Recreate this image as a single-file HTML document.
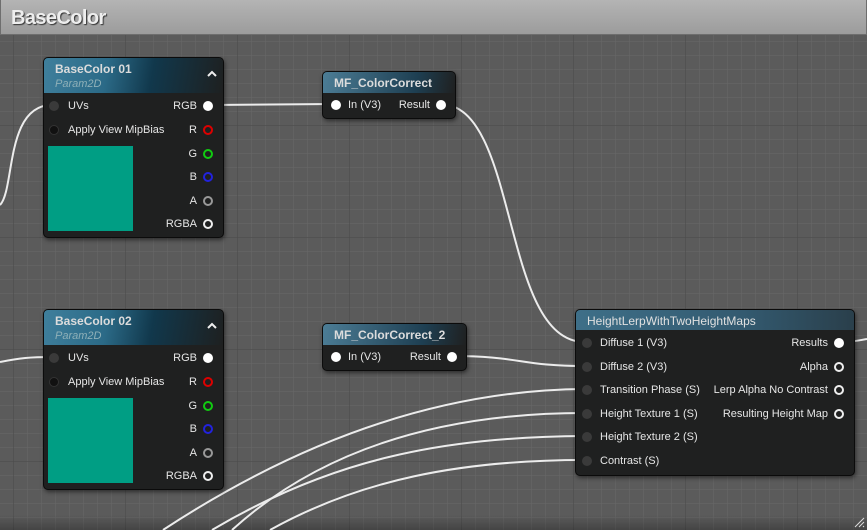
<!DOCTYPE html>
<html><head><style>
*{margin:0;padding:0;box-sizing:border-box}
body{width:867px;height:530px;overflow:hidden;background:#5b5b5b;font-family:"Liberation Sans",sans-serif;position:relative}
svg.bg{position:absolute;left:0;top:0}
.title{position:absolute;left:0;top:0;width:867px;height:35px;background:linear-gradient(#b4b4b4,#9c9c9c);border:1px solid #6e6e6e;border-top:0;}
.title span{position:absolute;left:10px;top:7px;font-size:20px;font-weight:bold;color:#eee;text-shadow:1px 1px 1px #333;letter-spacing:-0.6px}
.node{position:absolute;background:#1f2020;border:1px solid #0b0b0b;border-radius:5px;box-shadow:1px 2px 4px rgba(0,0,0,.5);color:#e6e6e6;font-size:11px}
.hd{position:absolute;left:0;top:0;right:0;border-radius:4px 4px 0 0;background:linear-gradient(100deg,#3f7f9c 0%,#2b6a87 35%,#11384c 60%,#1e2020 100%)}
.hd b{position:absolute;left:11px;top:4px;font-size:12px;color:#dcdcdc}
.hd i{position:absolute;left:11px;top:20px;font-size:11px;color:#8fb0b8}
.t{position:absolute;white-space:nowrap}
.r{position:absolute;white-space:nowrap;text-align:right}
.pin{position:absolute;width:10px;height:10px;border-radius:50%}
.chev{position:absolute;right:6px;top:12px}
</style></head><body>
<svg class="bg" width="867" height="530">
<defs>
<pattern id="mn" width="14" height="14" patternUnits="userSpaceOnUse" x="13" y="13"><path d="M0 0H14M0 0V14" stroke="#686868" stroke-width="1" fill="none"/></pattern>
<pattern id="mj" width="112" height="112" patternUnits="userSpaceOnUse" x="13" y="13"><path d="M0 0H112M0 0V112" stroke="#4c4c4c" stroke-width="1.2" fill="none"/></pattern>
<linearGradient id="bt" x1="0" y1="0" x2="0" y2="1"><stop offset="0" stop-color="#000" stop-opacity="0"/><stop offset="1" stop-color="#000" stop-opacity=".25"/></linearGradient>
</defs>
<rect width="867" height="530" fill="#5b5b5b"/>
<rect width="867" height="530" fill="url(#mn)"/>
<rect width="867" height="530" fill="url(#mj)"/>
<rect y="515" width="867" height="15" fill="url(#bt)"/>
<g stroke="#ececec" stroke-width="2" fill="none">
<path d="M0 205 C15 190 5 105 52 105"/>
<path d="M0 362 C20 358 30 357 52 357"/>
<path d="M210 105 L335 104"/>
<path d="M440 104 C520 104 500 342 585 342"/>
<path d="M452 356 C520 356 520 366 585 366"/>
<path d="M840 342 C855 342 860 340 867 339"/>
<path d="M163 530 C300 440 440 390 585 389"/>
<path d="M232 530 C320 450 440 413 585 413"/>
<path d="M212 530 C330 460 440 437 585 436"/>
<path d="M270 530 C360 480 460 460 585 460"/>
</g>
</svg>
<div class="title"><span>BaseColor</span></div>

<!-- BaseColor 01 -->
<div class="node" style="left:43px;top:57px;width:181px;height:181px">
<div class="hd" style="height:35px"><b>BaseColor 01</b><i>Param2D</i><svg class="chev" width="10" height="7"><path d="M1 6L5 2L9 6" stroke="#eee" stroke-width="2" fill="none"/></svg></div>
<div class="pin" style="left:5px;top:43px;background:#3a3a3a"></div><span class="t" style="left:24px;top:42px">UVs</span>
<div class="pin" style="left:5px;top:67px;background:#111;border:1px solid #333"></div><span class="t" style="left:24px;top:66px">Apply View MipBias</span>
<div style="position:absolute;left:4px;top:88px;width:85px;height:85px;background:#009e84"></div>
<span class="r" style="right:26px;top:42px">RGB</span><div class="pin" style="right:10px;top:43px;background:#fff"></div>
<span class="r" style="right:26px;top:66px">R</span><div class="pin" style="right:10px;top:67px;border:2px solid #d00"></div>
<span class="r" style="right:26px;top:90px">G</span><div class="pin" style="right:10px;top:91px;border:2px solid #1c1"></div>
<span class="r" style="right:26px;top:113px">B</span><div class="pin" style="right:10px;top:114px;border:2px solid #22d"></div>
<span class="r" style="right:26px;top:137px">A</span><div class="pin" style="right:10px;top:138px;border:2px solid #999"></div>
<span class="r" style="right:26px;top:160px">RGBA</span><div class="pin" style="right:10px;top:161px;border:2px solid #eee"></div>
</div>

<!-- BaseColor 02 -->
<div class="node" style="left:43px;top:309px;width:181px;height:181px">
<div class="hd" style="height:35px"><b>BaseColor 02</b><i>Param2D</i><svg class="chev" width="10" height="7"><path d="M1 6L5 2L9 6" stroke="#eee" stroke-width="2" fill="none"/></svg></div>
<div class="pin" style="left:5px;top:43px;background:#3a3a3a"></div><span class="t" style="left:24px;top:42px">UVs</span>
<div class="pin" style="left:5px;top:67px;background:#111;border:1px solid #333"></div><span class="t" style="left:24px;top:66px">Apply View MipBias</span>
<div style="position:absolute;left:4px;top:88px;width:85px;height:85px;background:#009e84"></div>
<span class="r" style="right:26px;top:42px">RGB</span><div class="pin" style="right:10px;top:43px;background:#fff"></div>
<span class="r" style="right:26px;top:66px">R</span><div class="pin" style="right:10px;top:67px;border:2px solid #d00"></div>
<span class="r" style="right:26px;top:90px">G</span><div class="pin" style="right:10px;top:91px;border:2px solid #1c1"></div>
<span class="r" style="right:26px;top:113px">B</span><div class="pin" style="right:10px;top:114px;border:2px solid #22d"></div>
<span class="r" style="right:26px;top:137px">A</span><div class="pin" style="right:10px;top:138px;border:2px solid #999"></div>
<span class="r" style="right:26px;top:160px">RGBA</span><div class="pin" style="right:10px;top:161px;border:2px solid #eee"></div>
</div>

<!-- MF_ColorCorrect -->
<div class="node" style="left:322px;top:71px;width:134px;height:48px">
<div class="hd" style="height:21px;background:linear-gradient(100deg,#4c7d96,#1e3f52 70%,#1f2020)"><b style="top:4px">MF_ColorCorrect</b></div>
<div class="pin" style="left:8px;top:28px;background:#fff"></div><span class="t" style="left:25px;top:27px">In (V3)</span>
<span class="r" style="right:25px;top:27px">Result</span><div class="pin" style="right:9px;top:28px;background:#fff"></div>
</div>

<!-- MF_ColorCorrect_2 -->
<div class="node" style="left:322px;top:323px;width:145px;height:48px">
<div class="hd" style="height:21px;background:linear-gradient(100deg,#4c7d96,#1e3f52 70%,#1f2020)"><b style="top:4px">MF_ColorCorrect_2</b></div>
<div class="pin" style="left:8px;top:28px;background:#fff"></div><span class="t" style="left:25px;top:27px">In (V3)</span>
<span class="r" style="right:25px;top:27px">Result</span><div class="pin" style="right:9px;top:28px;background:#fff"></div>
</div>

<!-- HeightLerp -->
<div class="node" style="left:575px;top:309px;width:280px;height:167px">
<div class="hd" style="height:20px;background:linear-gradient(90deg,#3e6f88,#335a70 60%,#2a3f4b)"><b style="top:4px;font-weight:normal;font-size:12px;color:#e0e0e0">HeightLerpWithTwoHeightMaps</b></div>
<div class="pin" style="left:6px;top:28px;background:#3a3a3a"></div><span class="t" style="left:24px;top:27px">Diffuse 1 (V3)</span>
<div class="pin" style="left:6px;top:52px;background:#3a3a3a"></div><span class="t" style="left:24px;top:51px">Diffuse 2 (V3)</span>
<div class="pin" style="left:6px;top:75px;background:#3a3a3a"></div><span class="t" style="left:24px;top:74px">Transition Phase (S)</span>
<div class="pin" style="left:6px;top:99px;background:#3a3a3a"></div><span class="t" style="left:24px;top:98px">Height Texture 1 (S)</span>
<div class="pin" style="left:6px;top:122px;background:#3a3a3a"></div><span class="t" style="left:24px;top:121px">Height Texture 2 (S)</span>
<div class="pin" style="left:6px;top:146px;background:#3a3a3a"></div><span class="t" style="left:24px;top:145px">Contrast (S)</span>
<span class="r" style="right:26px;top:27px">Results</span><div class="pin" style="right:10px;top:28px;background:#fff"></div>
<span class="r" style="right:26px;top:51px">Alpha</span><div class="pin" style="right:10px;top:52px;border:2px solid #eee"></div>
<span class="r" style="right:26px;top:74px">Lerp Alpha No Contrast</span><div class="pin" style="right:10px;top:75px;border:2px solid #eee"></div>
<span class="r" style="right:26px;top:98px">Resulting Height Map</span><div class="pin" style="right:10px;top:99px;border:2px solid #eee"></div>
</div>
<svg style="position:absolute;left:853px;top:516px" width="12" height="12"><path d="M2 11L11 2M6 11L11 6M10 11L11 10" stroke="#ddd" stroke-width="1"/></svg>
</body></html>
